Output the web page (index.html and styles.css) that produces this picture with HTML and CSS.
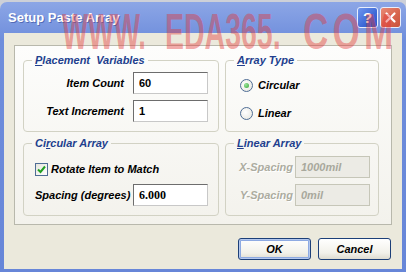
FILE: index.html
```html
<!DOCTYPE html>
<html lang="en">
<head>
  <meta charset="UTF-8" />
  <title>Setup Paste Array</title>
  <link rel="stylesheet" href="styles.css">
</head>
<body>
  <div class="window">
    <div class="titlebar">
      <span class="title">Setup Paste Array</span>
      <span class="cap-btn help">?</span>
      <span class="cap-btn close">
        <svg width="13" height="13" viewBox="0 0 13 13"><path d="M2.5 2.5 L10.5 10.5 M10.5 2.5 L2.5 10.5" stroke="#fff" stroke-width="2.2" stroke-linecap="round"/></svg>
      </span>
    </div>
    <div class="client">
      <div class="panel">
        <fieldset class="group">
          <legend><u>P</u>lacement&nbsp; Variables</legend>
          <div class="rows placement">
            <label class="lbl right" for="itemCount">Item Count</label>
            <input class="edit" type="text" id="itemCount" value="60" />
            <label class="lbl right" for="textInc">Text Increment</label>
            <input class="edit" type="text" id="textInc" value="1" />
          </div>
        </fieldset>

        <fieldset class="group">
          <legend><u>A</u>rray Type</legend>
          <div class="options">
            <label class="option"><span class="radio checked"></span>Circular</label>
            <label class="option"><span class="radio"></span>Linear</label>
          </div>
        </fieldset>

        <fieldset class="group">
          <legend>Ci<u>r</u>cular Array</legend>
          <div class="circular">
            <label class="option">
              <span class="check">
                <svg width="11" height="11" viewBox="0 0 11 11"><path d="M2 5.5 L4.5 8 L9 2.5" fill="none" stroke="#22a022" stroke-width="2"/></svg>
              </span>Rotate Item to Match
            </label>
            <div class="rows spacing">
              <label class="lbl" for="spacing">Spacing (degrees)</label>
              <input class="edit serif" type="text" id="spacing" value="6.000" />
            </div>
          </div>
        </fieldset>

        <fieldset class="group disabled">
          <legend><u>L</u>inear Array</legend>
          <div class="rows linear">
            <label class="lbl right" for="xSpacing">X-Spacing</label>
            <input class="edit" type="text" id="xSpacing" value="1000mil" disabled />
            <label class="lbl right" for="ySpacing">Y-Spacing</label>
            <input class="edit" type="text" id="ySpacing" value="0mil" disabled />
          </div>
        </fieldset>
      </div>

      <div class="buttons">
        <button class="btn default">OK</button>
        <button class="btn">Cancel</button>
      </div>
    </div>
  </div>

  <div class="watermark">
    <span class="wm-part wm-www">WWW.</span><span class="wm-part wm-eda">EDA365.</span><span class="wm-part wm-com">COM</span>
  </div>
</body>
</html>
```

FILE: styles.css
```css
body {
  margin: 0;
  width: 406px;
  height: 272px;
  overflow: hidden;
  background-color: #cdd0d8;
  font-family: 'Liberation Sans', Arial, sans-serif;
  position: relative;
}
.window {
  margin-top: 2px;
  height: 270px;
  display: flex;
  flex-direction: column;
  background: linear-gradient(#8ca6e6, #6f8edc 14%, #6786d8);
  border-radius: 7px 7px 0 0;
  box-sizing: border-box;
}
.titlebar {
  height: 31px;
  display: flex;
  align-items: center;
  padding: 0 5px 0 8px;
  gap: 2px;
}
.title {
  flex: 1;
  color: #ffffff;
  font-weight: bold;
  font-size: 13px;
  text-shadow: 1px 1px 0 rgba(40, 60, 140, 0.5);
}
.cap-btn {
  width: 21px;
  height: 21px;
  box-sizing: border-box;
  border: 1px solid #e8eefc;
  border-radius: 3px;
  display: flex;
  align-items: center;
  justify-content: center;
  color: #ffffff;
  font-weight: bold;
  font-size: 15px;
}
.help {
  background: linear-gradient(135deg, #6f96ee, #3c68d6 60%, #2f58c6);
}
.close {
  background: linear-gradient(135deg, #e98a76, #d7634d 60%, #c9523c);
}
.client {
  flex: 1;
  margin: 0 4px 3px 4px;
  background-color: #ebe9dc;
  display: flex;
  flex-direction: column;
}
.panel {
  margin: 12px 0 0 10px;
  width: 378px;
  height: 180px;
  box-sizing: border-box;
  border: 1px solid #b8b8ac;
  background: linear-gradient(#fdfdfc, #f3f2ec);
  padding: 7px 0 0 8px;
  display: grid;
  grid-template-columns: 196px 154px;
  grid-template-rows: 79px 80px;
  column-gap: 6px;
  row-gap: 4px;
}
.group {
  margin: 0;
  padding: 0;
  min-width: 0;
  box-sizing: border-box;
  border: 1px solid #d2d2c4;
  border-radius: 4px;
}
.group legend {
  margin-left: 8px;
  padding: 0 3px;
  font-size: 11px;
  line-height: 14px;
  font-weight: bold;
  font-style: italic;
  color: #223f8e;
}
.lbl {
  font-size: 11px;
  font-weight: bold;
  font-style: italic;
  color: #000000;
  white-space: nowrap;
}
.right {
  text-align: right;
}
.rows {
  display: grid;
  align-items: center;
  row-gap: 6px;
}
.placement {
  padding-top: 5px;
  grid-template-columns: 100px 75px;
  column-gap: 9px;
}
.edit {
  height: 22px;
  box-sizing: border-box;
  margin: 0;
  padding: 0 5px;
  border: 1px solid #6d6d6d;
  border-right-color: #c8c8c8;
  border-bottom-color: #c8c8c8;
  background: #ffffff;
  font-family: 'Liberation Sans', Arial, sans-serif;
  font-size: 11px;
  font-weight: bold;
  color: #000000;
}
.serif {
  font-family: 'Liberation Serif', 'Times New Roman', serif;
  font-size: 12px;
}
.options {
  padding: 7px 0 0 14px;
  display: flex;
  flex-direction: column;
  gap: 6px;
}
.option {
  height: 22px;
  display: flex;
  align-items: center;
  gap: 5px;
  font-size: 11px;
  font-weight: bold;
  font-style: italic;
  color: #000000;
}
.radio {
  width: 13px;
  height: 13px;
  box-sizing: border-box;
  border: 1px solid #4f6d95;
  border-radius: 50%;
  background: radial-gradient(circle at 40% 40%, #ffffff, #e4e4dc);
  display: flex;
  align-items: center;
  justify-content: center;
}
.radio.checked::after {
  content: "";
  width: 5px;
  height: 5px;
  border-radius: 50%;
  background: radial-gradient(circle at 35% 35%, #9be39b, #36a836);
}
.circular {
  padding: 8px 0 0 11px;
  display: flex;
  flex-direction: column;
  gap: 4px;
}
.check {
  width: 13px;
  height: 13px;
  box-sizing: border-box;
  border: 1px solid #4f6d95;
  background: linear-gradient(135deg, #e6e6de, #ffffff);
  display: flex;
  align-items: center;
  justify-content: center;
  margin-right: -2px;
}
.spacing {
  grid-template-columns: 98px 75px;
}
.linear {
  padding: 6px 0 0 12px;
  grid-template-columns: 55px 75px;
  column-gap: 2px;
}
.disabled .lbl {
  color: #acaca0;
  text-shadow: 1px 1px 0 #ffffff;
}
.disabled .edit {
  background: #ecebe5;
  border: 1px solid #c6c6b8;
  color: #a8a89c;
  font-style: italic;
}
.buttons {
  margin-top: 13px;
  padding-right: 11px;
  display: flex;
  justify-content: flex-end;
  gap: 7px;
}
.btn {
  width: 73px;
  height: 22px;
  margin: 0;
  padding: 0;
  border: 1px solid #1c3f78;
  border-radius: 3px;
  background: linear-gradient(#ffffff, #f2f1ea 70%, #dedcd0);
  font-family: 'Liberation Sans', Arial, sans-serif;
  font-size: 11px;
  font-weight: bold;
  font-style: italic;
  color: #000000;
}
.btn.default {
  box-shadow: inset 0 0 0 1px #b4c8ee, inset 0 0 0 2px #8eaae2;
}
.watermark {
  position: absolute;
  left: 62px;
  top: 7px;
  width: 340px;
  display: flex;
  font-family: 'Liberation Sans', Arial, sans-serif;
  font-size: 50px;
  line-height: 50px;
  font-weight: bold;
  color: rgba(228, 52, 52, 0.42);
  pointer-events: none;
  white-space: nowrap;
}
.wm-part {
  display: inline-block;
  transform-origin: left center;
}
.wm-www {
  width: 103px;
  transform: scaleX(0.55);
}
.wm-eda {
  width: 138px;
  transform: scaleX(0.57);
}
.wm-com {
  width: 96px;
  letter-spacing: 6px;
  transform: scaleX(0.7);
}
```
